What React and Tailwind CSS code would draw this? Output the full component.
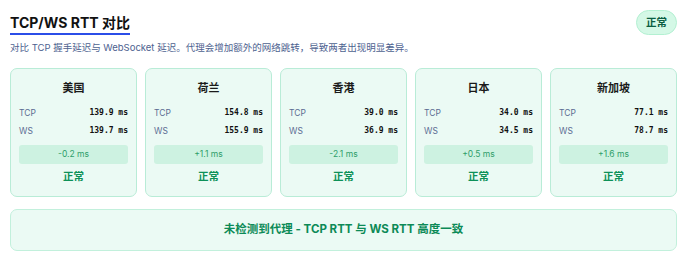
import React from "react";

const regions = [
  { name: "美国", tcp: "139.9 ms", ws: "139.7 ms", diff: "-0.2 ms" },
  { name: "荷兰", tcp: "154.8 ms", ws: "155.9 ms", diff: "+1.1 ms" },
  { name: "香港", tcp: "39.0 ms", ws: "36.9 ms", diff: "-2.1 ms" },
  { name: "日本", tcp: "34.0 ms", ws: "34.5 ms", diff: "+0.5 ms" },
  { name: "新加坡", tcp: "77.1 ms", ws: "78.7 ms", diff: "+1.6 ms" },
];

const sans = "font-['Inter','Noto_Sans_CJK_SC',sans-serif]";
const mono = "font-['DejaVu_Sans_Mono','Liberation_Mono',monospace]";

const RegionCard = ({ r }) => (
  <div className="flex flex-col border border-[#b9ecd7] bg-[#ebfaf4] rounded-[7px] px-2 pt-[11px] pb-[11px]">
    <div className="text-center text-[11px] leading-[16px] font-bold text-[#1a1a1a]">{r.name}</div>
    <div className="mt-2 flex items-center justify-between h-[18px]">
      <span className="text-[8.5px] text-[#5a6a92]">TCP</span>
      <span className={`${mono} text-[8px] font-bold text-[#111]`}>{r.tcp}</span>
    </div>
    <div className="flex items-center justify-between h-[18px]">
      <span className="text-[8.5px] text-[#5a6a92]">WS</span>
      <span className={`${mono} text-[8px] font-bold text-[#111]`}>{r.ws}</span>
    </div>
    <div className="mt-[5px] h-[19px] rounded-[3px] bg-[#cdf2e1] flex items-center justify-center text-[8.5px] text-[#2f9e6a]">
      {r.diff}
    </div>
    <div className="mt-[5px] text-center text-[10.5px] leading-[16px] font-bold text-[#0d9158]">正常</div>
  </div>
);

export default function App() {
  return (
    <div className={`${sans} bg-white w-[690px] h-[258px] px-[10px] pt-[10px]`}>
      <div className="flex items-start justify-between">
        <div>
          <h2 className="inline-block text-[14px] leading-[21px] font-bold text-[#111] border-b-2 border-[#2b4de8]">
            TCP/WS RTT 对比
          </h2>
          <p className="mt-[6px] text-[9.5px] leading-[14px] text-[#4d628f]">
            对比 TCP 握手延迟与 WebSocket 延迟。代理会增加额外的网络跳转，导致两者出现明显差异。
          </p>
        </div>
        <span className="mr-[3px] h-[25px] px-[9px] flex items-center rounded-full bg-[#d4f8e6] border border-[#b3f0d2] text-[10.5px] font-bold text-[#0b5e42]">
          正常
        </span>
      </div>

      <div className="mt-[13px] mr-[3px] grid grid-cols-5 gap-2">
        {regions.map((r) => (
          <RegionCard key={r.name} r={r} />
        ))}
      </div>

      <div className="mt-3 mr-[3px] h-[42px] rounded-[7px] border border-[#c2f0dc] bg-[#ebfaf4] flex items-center justify-center text-[11.5px] font-bold text-[#0c8a57]">
        未检测到代理 - TCP RTT 与 WS RTT 高度一致
      </div>
    </div>
  );
}
